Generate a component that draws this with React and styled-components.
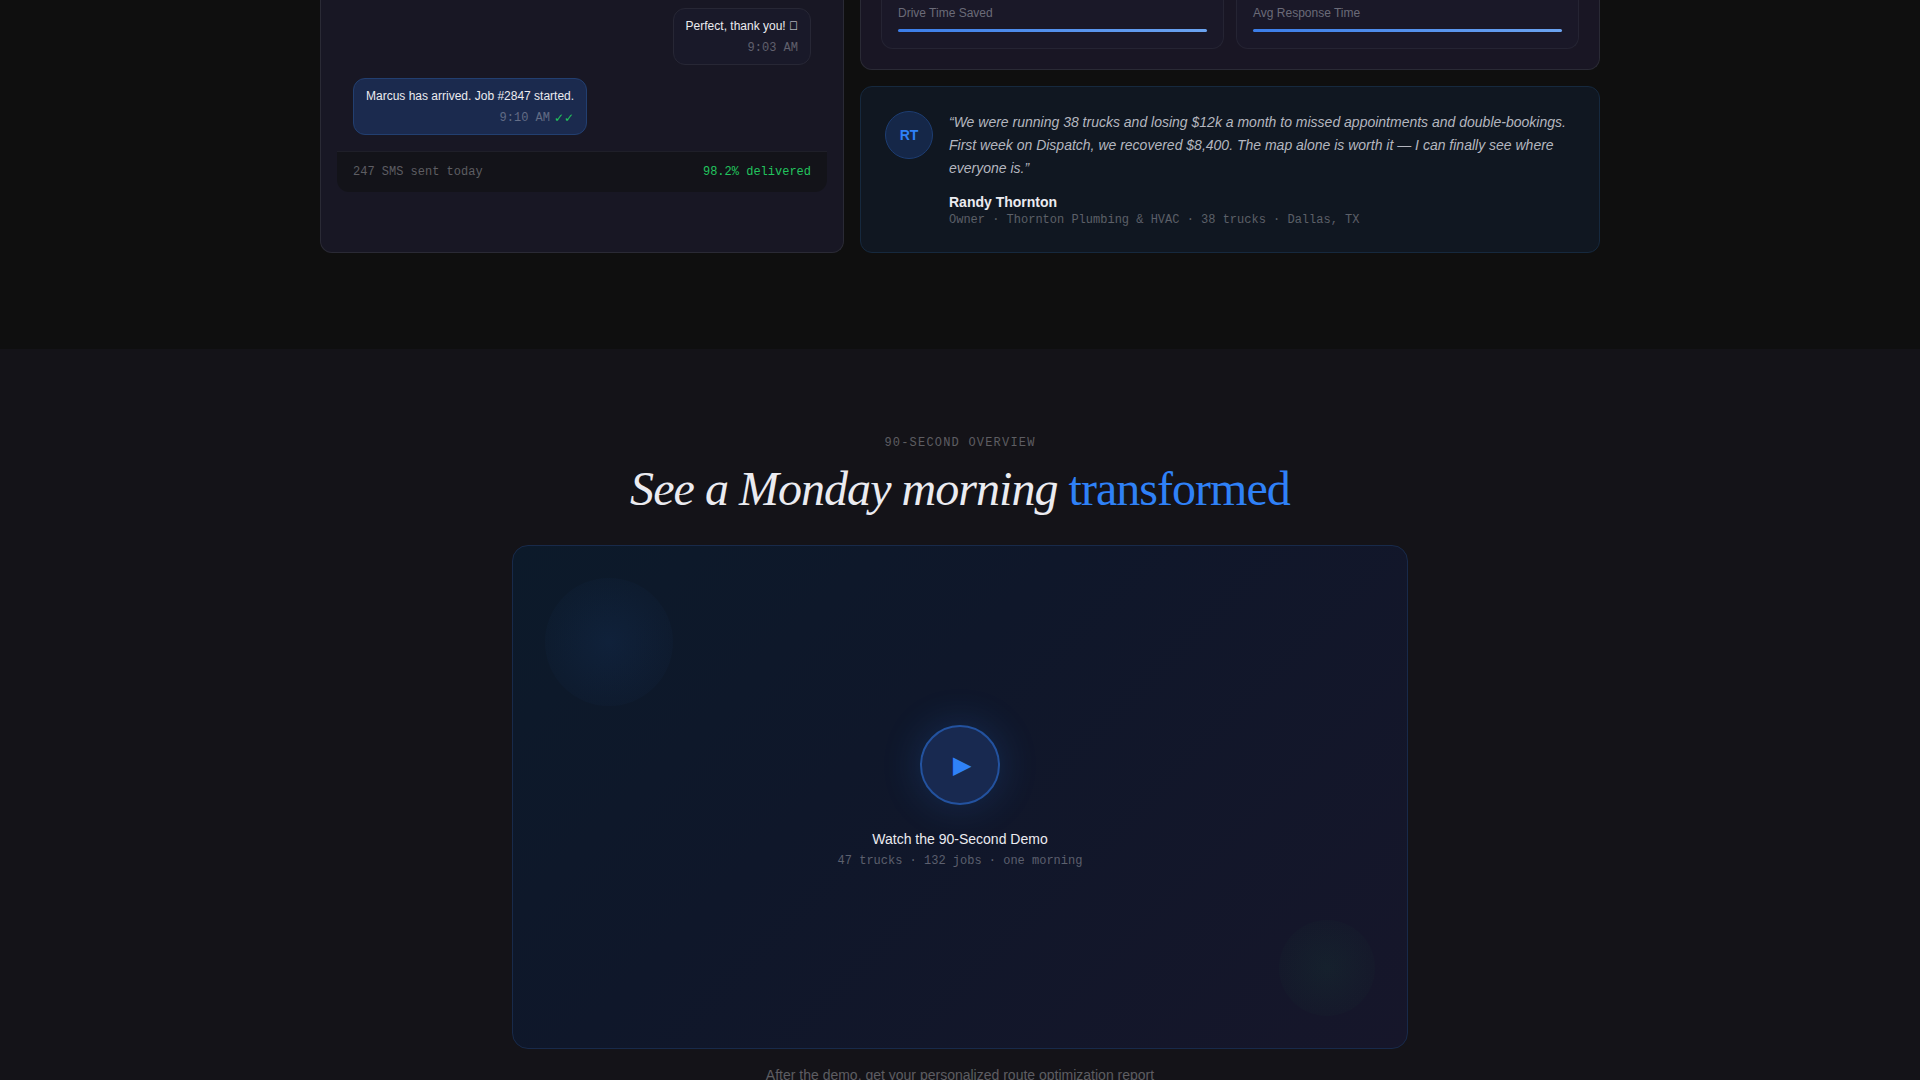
import styled, { createGlobalStyle } from "styled-components";

const stats = [
  { label: "Drive Time Saved", value: 100 },
  { label: "Avg Response Time", value: 100 },
];

const messages = [
  { text: "Perfect, thank you! \uE000", time: "9:03 AM", from: "customer" },
  {
    text: "Marcus has arrived. Job #2847 started.",
    time: "9:10 AM",
    from: "dispatch",
    read: true,
  },
];

const SmsCard = () => (
  <SmsPanel>
    <Messages>
      {messages.map(({ text, time, from, read }) => (
        <Bubble key={time} $sent={from === "dispatch"}>
          <p>{text}</p>
          <Meta>
            <span>{time}</span>
            {read && <Ticks>✓✓</Ticks>}
          </Meta>
        </Bubble>
      ))}
    </Messages>
    <SmsFooter>
      <span>247 SMS sent today</span>
      <Delivered>98.2% delivered</Delivered>
    </SmsFooter>
  </SmsPanel>
);

const StatsCard = () => (
  <StatsPanel>
    {stats.map(({ label, value }) => (
      <Stat key={label}>
        <p>{label}</p>
        <Track>
          <Bar style={{ width: `${value}%` }} />
        </Track>
      </Stat>
    ))}
  </StatsPanel>
);

const Testimonial = () => (
  <Quote>
    <Avatar>RT</Avatar>
    <div>
      <blockquote>
        “We were running 38 trucks and losing $12k a month to missed
        appointments and double-bookings. First week on Dispatch, we recovered
        $8,400. The map alone is worth it — I can finally see where everyone
        is.”
      </blockquote>
      <Author>Randy Thornton</Author>
      <Role>Owner · Thornton Plumbing &amp; HVAC · 38 trucks · Dallas, TX</Role>
    </div>
  </Quote>
);

const App = () => {
  return (
    <>
      <GlobalStyle />
      <Features>
        <Grid>
          <SmsCard />
          <Column>
            <StatsCard />
            <Testimonial />
          </Column>
        </Grid>
      </Features>

      <Demo>
        <Eyebrow>90-SECOND OVERVIEW</Eyebrow>
        <Title>
          See a Monday morning <span>transformed</span>
        </Title>
        <Video>
          <Glow $corner="start" />
          <Glow $corner="end" />
          <PlayButton type="button" aria-label="Play the demo">
            ▶
          </PlayButton>
          <VideoTitle>Watch the 90-Second Demo</VideoTitle>
          <VideoMeta>47 trucks · 132 jobs · one morning</VideoMeta>
        </Video>
        <Caption>
          After the demo, get your personalized route optimization report
        </Caption>
      </Demo>
    </>
  );
};

const GlobalStyle = createGlobalStyle`
  :root {
    --blue: #2f81f7;
    --green: #22c55e;
    --text: #ebebf0;
    --muted: rgba(240, 240, 245, 0.34);
    --sans: "Liberation Sans", Arial, sans-serif;
    --serif: "Liberation Serif", "Times New Roman", serif;
    --mono: "Liberation Mono", "Courier New", monospace;
  }

  * {
    box-sizing: border-box;
    margin: 0;
    padding: 0;
  }

  body {
    height: 100vh;
    overflow: hidden;
    background: #141318;
    color: var(--text);
    font-family: var(--sans);
    font-size: 14px;
  }
`;

const Features = styled.section`
  background: #0f0f0f;
  padding: 0 24px 96px;
`;

const Grid = styled.div`
  display: grid;
  grid-template-columns: repeat(12, 1fr);
  gap: 16px;
  max-width: 1280px;
  margin: 0 auto;
`;

const Column = styled.div`
  grid-column: span 7;
  display: flex;
  flex-direction: column;
  gap: 16px;
`;

const SmsPanel = styled.article`
  grid-column: span 5;
  background: #181724;
  border: 1px solid #2a2a35;
  border-top: 0;
  border-radius: 0 0 12px 12px;
  padding: 0 16px 16px;
`;

const Messages = styled.div`
  display: flex;
  flex-direction: column;
  gap: 13px;
  padding: 8px 16px 16px;
`;

const Bubble = styled.div`
  align-self: ${({ $sent }) => ($sent ? "flex-start" : "flex-end")};
  background: ${({ $sent }) => ($sent ? "#1b2a4e" : "#191929")};
  border: 1px solid ${({ $sent }) => ($sent ? "#223f70" : "#272735")};
  border-radius: 12px;
  padding: 8px 12px;
  font-size: 12px;
  line-height: 18px;
`;

const Meta = styled.div`
  display: flex;
  justify-content: flex-end;
  gap: 4px;
  margin-top: 5px;
  color: var(--muted);
  font-family: var(--mono);
  line-height: 16px;
`;

const Ticks = styled.span`
  color: var(--green);
  font-family: "DejaVu Sans", sans-serif;
`;

const SmsFooter = styled.footer`
  display: flex;
  justify-content: space-between;
  background: #131319;
  border-top: 1px solid #1f1f29;
  border-radius: 0 0 12px 12px;
  padding: 12px 16px;
  color: var(--muted);
  font-family: var(--mono);
  font-size: 12px;
  line-height: 16px;
`;

const Delivered = styled.span`
  color: var(--green);
`;

const StatsPanel = styled.article`
  display: grid;
  grid-template-columns: 1fr 1fr;
  gap: 12px;
  background: #191624;
  border: 1px solid #2a2a35;
  border-top: 0;
  border-radius: 0 0 12px 12px;
  padding: 0 20px 20px;
`;

const Stat = styled.div`
  background: #1a1828;
  border: 1px solid #252433;
  border-top: 0;
  border-radius: 0 0 12px 12px;
  padding: 5px 16px 16px;
  color: #6b6b78;
  font-size: 12px;
  line-height: 16px;
`;

const Track = styled.div`
  height: 3px;
  margin-top: 8px;
  border-radius: 2px;
  background: #222233;
`;

const Bar = styled.div`
  height: 100%;
  border-radius: 2px;
  background: linear-gradient(90deg, #3b7de8, #6ba3f0);
`;

const Quote = styled.article`
  display: flex;
  gap: 16px;
  background: #101721;
  border: 1px solid #16293e;
  border-radius: 12px;
  padding: 24px;

  blockquote {
    color: #b4b6bf;
    font-style: italic;
    line-height: 23px;
  }
`;

const Avatar = styled.div`
  display: grid;
  place-items: center;
  flex: none;
  width: 48px;
  height: 48px;
  border: 1px solid #1d3d72;
  border-radius: 50%;
  background: #152748;
  color: var(--blue);
  font-weight: bold;
`;

const Author = styled.p`
  margin-top: 12px;
  font-weight: bold;
  line-height: 20px;
`;

const Role = styled.p`
  color: var(--muted);
  font-family: var(--mono);
  font-size: 12px;
  line-height: 16px;
`;

const Demo = styled.section`
  display: flex;
  flex-direction: column;
  align-items: center;
  background: #141318;
  padding: 86px 24px;
`;

const Eyebrow = styled.p`
  color: var(--muted);
  font-family: var(--mono);
  font-size: 12px;
  letter-spacing: 0.1em;
  line-height: 16px;
`;

const Title = styled.h2`
  margin: 12px 0 30px;
  font-family: var(--serif);
  font-size: 48px;
  font-style: italic;
  font-weight: normal;
  letter-spacing: -0.02em;
  line-height: 52px;

  span {
    color: var(--blue);
    font-style: normal;
  }
`;

const Video = styled.div`
  position: relative;
  display: flex;
  flex-direction: column;
  align-items: center;
  justify-content: center;
  width: 100%;
  max-width: 896px;
  aspect-ratio: 16 / 9;
  border: 1px solid #182a4a;
  border-radius: 16px;
  background: linear-gradient(135deg, #0c1a2a 0%, #0f172a 40%, #16162a 100%);
`;

const Glow = styled.div`
  position: absolute;
  border-radius: 50%;
  ${({ $corner }) =>
    $corner === "start"
      ? `
    top: 32px;
    left: 32px;
    width: 128px;
    height: 128px;
    background: radial-gradient(circle, rgba(47, 129, 247, 0.08), transparent);
  `
      : `
    right: 32px;
    bottom: 32px;
    width: 96px;
    height: 96px;
    background: radial-gradient(circle, rgba(34, 197, 94, 0.06), transparent);
  `}
`;

const PlayButton = styled.button`
  display: grid;
  place-items: center;
  width: 80px;
  height: 80px;
  margin-bottom: 24px;
  border: 2px solid #23529f;
  border-radius: 50%;
  background: #182950;
  box-shadow: 0 0 40px rgba(47, 129, 247, 0.2);
  color: var(--blue);
  font-family: var(--sans);
  font-size: 24px;
  padding-left: 4px;
  cursor: pointer;
`;

const VideoTitle = styled.p`
  line-height: 20px;
`;

const VideoMeta = styled.p`
  margin-top: 4px;
  color: var(--muted);
  font-family: var(--mono);
  font-size: 12px;
  line-height: 16px;
`;

const Caption = styled.p`
  margin-top: 16px;
  color: var(--muted);
  line-height: 20px;
`;

export default App;
